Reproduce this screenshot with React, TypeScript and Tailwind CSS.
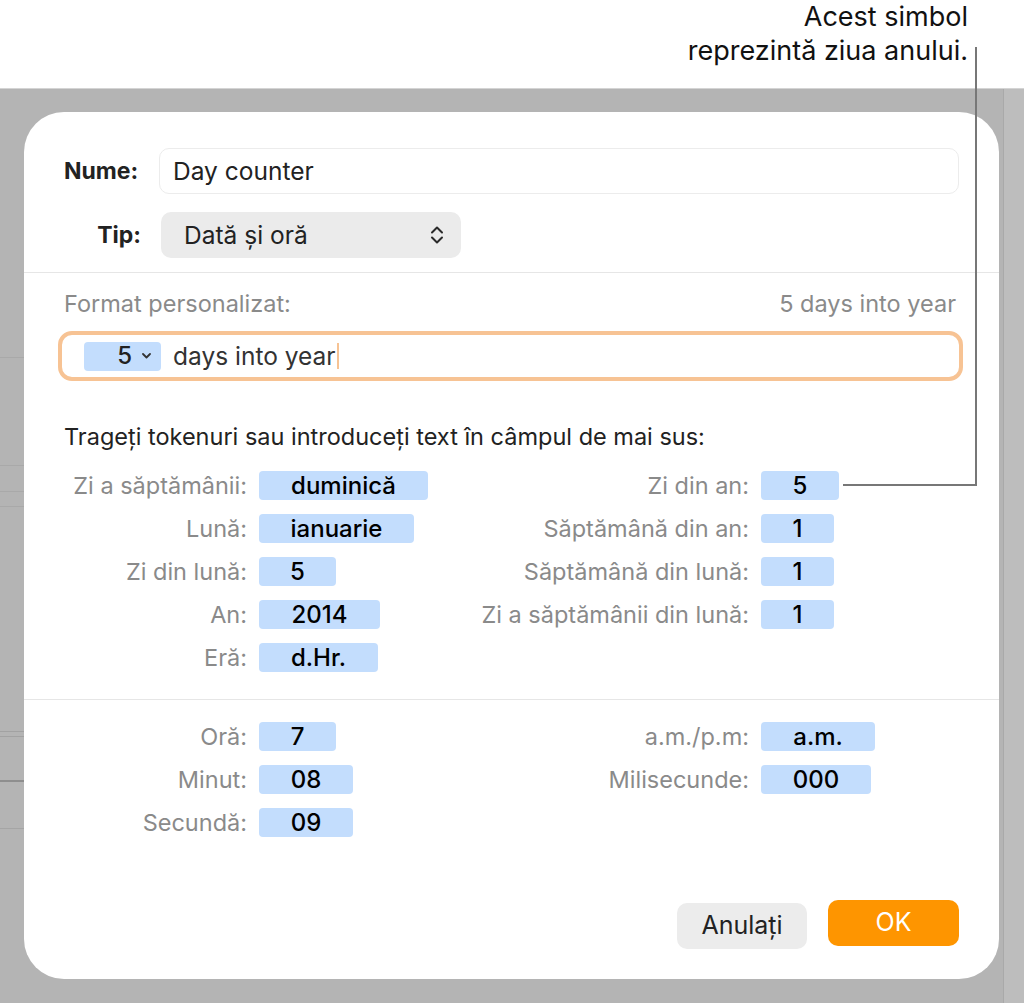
import React from "react";

type Token = { label: string; value: string; w: string };

const dateLeft: Token[] = [
  { label: "Zi a săptămânii:", value: "duminică", w: "w-[169px]" },
  { label: "Lună:", value: "ianuarie", w: "w-[155px]" },
  { label: "Zi din lună:", value: "5", w: "w-[77px]" },
  { label: "An:", value: "2014", w: "w-[121px]" },
  { label: "Eră:", value: "d.Hr.", w: "w-[119px]" },
];

const dateRight: Token[] = [
  { label: "Zi din an:", value: "5", w: "w-[78px]" },
  { label: "Săptămână din an:", value: "1", w: "w-[73px]" },
  { label: "Săptămână din lună:", value: "1", w: "w-[73px]" },
  { label: "Zi a săptămânii din lună:", value: "1", w: "w-[73px]" },
];

const timeLeft: Token[] = [
  { label: "Oră:", value: "7", w: "w-[77px]" },
  { label: "Minut:", value: "08", w: "w-[94px]" },
  { label: "Secundă:", value: "09", w: "w-[94px]" },
];

const timeRight: Token[] = [
  { label: "a.m./p.m:", value: "a.m.", w: "w-[114px]" },
  { label: "Milisecunde:", value: "000", w: "w-[110px]" },
];

function TokenRow({ t, labelW }: { t: Token; labelW: string }) {
  return (
    <div className="flex h-[29px] items-center">
      <span
        className={`${labelW} whitespace-nowrap pr-[12px] text-right text-[23.5px] leading-[29px] text-[#8a8a8a]`}
      >
        {t.label}
      </span>
      <span
        className={`${t.w} flex h-[29px] items-center justify-center rounded-[4px] bg-[#c3ddfd] text-[24px] font-medium text-black`}
      >
        {t.value}
      </span>
    </div>
  );
}

function TokenGrid({ left, right }: { left: Token[]; right: Token[] }) {
  return (
    <div className="flex">
      <div className="flex w-[376px] flex-col gap-[14px]">
        {left.map((t) => (
          <TokenRow key={t.label} t={t} labelW="w-[195px]" />
        ))}
      </div>
      <div className="flex flex-col gap-[14px]">
        {right.map((t) => (
          <TokenRow key={t.label} t={t} labelW="w-[321px]" />
        ))}
      </div>
    </div>
  );
}

function LeftStrip() {
  return (
    <div className="flex w-[24px] flex-col">
      <div className="h-[269px] border-b border-[#a9a9a9]" />
      <div className="h-[108px] border-b border-[#a9a9a9]" />
      <div className="h-[26px] border-b border-[#a9a9a9]" />
      <div className="h-[15px] border-b border-[#a9a9a9]" />
      <div className="h-[225px] border-b border-[#a2a2a2]" />
      <div className="h-[5px] border-b border-[#a2a2a2]" />
      <div className="h-[45px] border-b-2 border-[#8e8e8e]" />
      <div className="h-[47px] border-b border-[#a5a5a5]" />
    </div>
  );
}

function Dialog() {
  return (
    <div className="mt-[23px] flex h-[867px] w-[975px] flex-col rounded-[40px] bg-white">
      {/* name + type */}
      <div className="flex flex-col gap-[18px] border-b border-[#e6e6e6] px-[40px] pb-[14px] pt-[36px]">
        <div className="flex h-[46px] items-center">
          <span className="w-[80px] whitespace-nowrap text-[23px] font-bold text-[#222]">Nume:</span>
          <div className="ml-[15px] flex h-[46px] w-[800px] items-center rounded-[10px] border-[1.5px] border-[#ececec] px-[13px] text-[24.5px] text-[#222]">
            Day counter
          </div>
        </div>
        <div className="flex h-[46px] items-center">
          <span className="w-[77px] text-right text-[23px] font-bold text-[#222]">Tip:</span>
          <div className="ml-[20px] flex h-[46px] w-[300px] items-center justify-between rounded-[10px] bg-[#ebebeb] pl-[23px] pr-[17px] text-[24.5px] text-[#222]">
            <span>Dată și oră</span>
            <svg width="14" height="22" viewBox="0 0 14 22" fill="none">
              <path d="M2 8.5 L7 3.5 L12 8.5" stroke="#2a2a2a" strokeWidth="2" strokeLinecap="round" strokeLinejoin="round" />
              <path d="M2 13.5 L7 18.5 L12 13.5" stroke="#2a2a2a" strokeWidth="2" strokeLinecap="round" strokeLinejoin="round" />
            </svg>
          </div>
        </div>
      </div>

      {/* format + date tokens */}
      <div className="flex flex-col border-b border-[#e6e6e6] px-[40px] pb-[27px] pt-[19px]">
        <div className="flex h-[24px] items-center justify-between text-[23.5px] text-[#8a8a8a]">
          <span>Format personalizat:</span>
          <span className="mr-[3px]">5 days into year</span>
        </div>
        <div className="-ml-[6px] -mr-[4px] mt-[15px] flex h-[50px] items-center rounded-[14px] border-[4px] border-[#f7c394] pl-[22px]">
          <span className="flex h-[29px] w-[77px] items-center justify-end gap-[10px] rounded-[4px] bg-[#c3ddfd] pr-[10px] text-[24px] font-medium text-[#222]">
            5
            <svg width="9" height="6" viewBox="0 0 9 6" fill="none">
              <path d="M1 1 L4.5 4.5 L8 1" stroke="#333" strokeWidth="1.8" strokeLinecap="round" strokeLinejoin="round" />
            </svg>
          </span>
          <span className="ml-[12px] text-[24.5px] text-[#333]">days into year</span>
          <span className="ml-[1px] h-[26px] w-[2px] bg-[#f7c394]" />
        </div>
        <div className="mt-[44px] h-[24px] whitespace-nowrap text-[23.5px] leading-[24px] text-[#222]">
          Trageți tokenuri sau introduceți text în câmpul de mai sus:
        </div>
        <div className="mt-[22px]">
          <TokenGrid left={dateLeft} right={dateRight} />
        </div>
      </div>

      {/* time tokens + buttons */}
      <div className="flex flex-1 flex-col px-[40px] pb-[30px] pt-[22px]">
        <TokenGrid left={timeLeft} right={timeRight} />
        <div className="mt-auto flex items-start justify-end gap-[21px]">
          <button
            type="button"
            className="mt-[3px] h-[46px] w-[130px] rounded-[10px] bg-[#ececec] text-[25px] text-[#222]"
          >
            Anulați
          </button>
          <button
            type="button"
            className="h-[46px] w-[131px] rounded-[10px] bg-[#fe9500] text-[25px] text-white"
          >
            OK
          </button>
        </div>
      </div>
    </div>
  );
}

export default function App() {
  return (
    <div className="relative h-[1003px] w-[1024px] overflow-hidden bg-white font-['Inter',sans-serif]">
      <header className="flex h-[88px] flex-col items-end pr-[56px] text-[27px] leading-[34px] text-[#111]">
        <span>Acest simbol</span>
        <span>reprezintă ziua anului.</span>
      </header>
      <div className="flex h-[915px] border-t border-[#d4d4d4] bg-[#b4b4b4]">
        <LeftStrip />
        <Dialog />
        <div className="ml-[4px] w-[21px] border-l border-[#a9a9a9] bg-[#bdbdbd]" />
      </div>

      {/* callout leader line */}
      <div className="absolute left-[975px] top-[47px] h-[439px] w-[2px] bg-[#777]" />
      <div className="absolute left-[843px] top-[484px] h-[2px] w-[134px] bg-[#777]" />
    </div>
  );
}
